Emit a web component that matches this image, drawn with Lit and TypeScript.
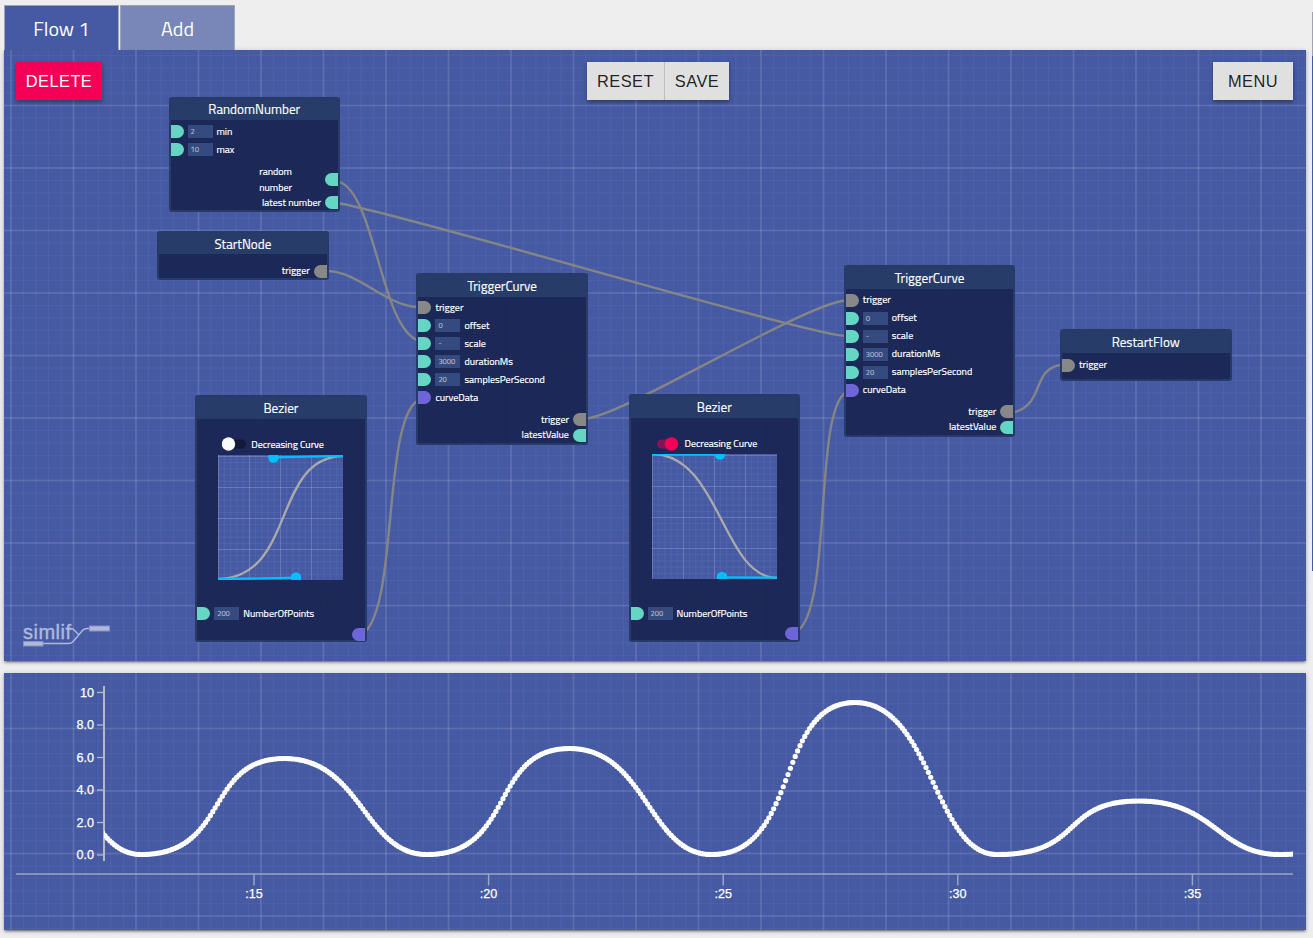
import { LitElement, html, svg, css } from "lit";
import { customElement } from "lit/decorators.js";

type Port = { y: number; label: string; kind: string; value?: string };
type FlowNode = {
  x: number; y: number; h: number; head: number; title: string;
  ins: Port[]; outs: Port[]; curve?: "up" | "down";
};

const curveIns = (values: string[]): Port[] => [
  { y: 34.5, label: "trigger", kind: "grey" },
  { y: 52.5, label: "offset", kind: "mint", value: values[0] },
  { y: 70.5, label: "scale", kind: "mint", value: values[1] },
  { y: 88.5, label: "durationMs", kind: "mint", value: values[2] },
  { y: 106.5, label: "samplesPerSecond", kind: "mint", value: values[3] },
  { y: 124.5, label: "curveData", kind: "violet" },
];
const curveOuts: Port[] = [
  { y: 146.5, label: "trigger", kind: "grey" },
  { y: 162, label: "latestValue", kind: "mint" },
];
const nodes: FlowNode[] = [
  { x: 168.5, y: 97, h: 114.5, head: 21, title: "RandomNumber",
    ins: [{ y: 34.5, label: "min", kind: "mint", value: "2" }, { y: 52.5, label: "max", kind: "mint", value: "10" }],
    outs: [{ y: 82.5, label: "random\nnumber", kind: "mint" }, { y: 105.5, label: "latest number", kind: "mint" }] },
  { x: 157.2, y: 231.4, h: 49, head: 21, title: "StartNode", ins: [], outs: [{ y: 39.7, label: "trigger", kind: "grey" }] },
  { x: 416.4, y: 273, h: 171.5, head: 22, title: "TriggerCurve", ins: curveIns(["0", "-", "3000", "20"]), outs: curveOuts },
  { x: 843.8, y: 265.4, h: 171.5, head: 22, title: "TriggerCurve", ins: curveIns(["0", "-", "3000", "20"]).map((p) => ({ ...p, y: p.y + 0.6 })), outs: curveOuts },
  { x: 1060, y: 329.4, h: 51.5, head: 22, title: "RestartFlow", ins: [{ y: 35.7, label: "trigger", kind: "grey" }], outs: [] },
  { x: 195.2, y: 394.6, h: 247.5, head: 22, title: "Bezier", curve: "up",
    ins: [{ y: 219, label: "NumberOfPoints", kind: "mint", value: "200" }], outs: [{ y: 239.5, label: "", kind: "violet" }] },
  { x: 628.5, y: 394, h: 248, head: 22, title: "Bezier", curve: "down",
    ins: [{ y: 219.6, label: "NumberOfPoints", kind: "mint", value: "200" }], outs: [{ y: 239.5, label: "", kind: "violet" }] },
];

@customElement("flow-node")
class FlowNodeElement extends LitElement {
  static properties = { node: { attribute: false } };
  declare node: FlowNode;
  static styles = css`
    :host { position: absolute; width: 171.5px; box-sizing: border-box; font-family: "Titillium Web", Roboto, sans-serif; color: #fff; }
    .box { position: relative; height: 100%; box-sizing: border-box; background: rgba(26, 37, 82, 0.94); border: 2px solid rgba(37, 57, 102, 0.96); border-radius: 3px; background-clip: padding-box; }
    .title { box-sizing: border-box; background: #283c69; font-size: 13.2px; text-align: center; line-height: 22px; -webkit-text-stroke: 0.15px #fff; }
    .title.tight { line-height: 20.5px; }
    .port { position: absolute; display: flex; align-items: center; height: 16px; font-size: 10px; line-height: 16px; white-space: pre; transform: translateY(-50%); }
    .label { margin-left: 4px; }
    .text { -webkit-text-stroke: 0.2px #fff; }
    .in { left: 0; }
    .out { right: 0; }
    .pin { width: 13px; height: 13px; flex: none; }
    .in .pin { border-radius: 0 6.5px 6.5px 0; }
    .out .pin { border-radius: 6.5px 0 0 6.5px; margin-left: 4px; }
    .two .pin { margin-left: 33px; }
    .mint { background: #65d6c3; }
    .grey { background: #888; }
    .violet { background: #6e65d8; }
    .value { width: 25px; height: 12.5px; line-height: 13px; box-sizing: border-box; padding-left: 3px; margin-left: 4px; background: #354b7f; color: #b3b8c9; font-size: 7.5px; -webkit-text-stroke: 0.15px #b3b8c9; }
    .switch { position: absolute; left: 24.5px; top: 39.5px; display: flex; align-items: center; height: 16px; font-size: 10px; }
    .switch svg { width: 26px; height: 16px; margin-right: 3.5px; }
    .plot { position: absolute; left: 21px; top: 58px; width: 125px; height: 125px; }
  `;
  render() {
    const n = this.node;
    const up = n.curve === "up";
    const lines = Array.from({ length: 20 }, (_, i) => 1.5 + i * 6.2);
    return html`<div class="box">
      <div class="title ${n.y < 200 ? "tight" : ""}" style="height:${n.head}px">${n.title}</div>
      ${n.ins.map((p) => html`<div class="port in" style="top:${p.y - 2}px"><i class="pin ${p.kind}"></i>${p.value ? html`<span class="value">${p.value}</span>` : ""}<span class="label text">${p.label}</span></div>`)}
      ${n.outs.map((p) => html`<div class="port out ${p.label.includes("\n") ? "two" : ""}" style="top:${p.y - 2}px"><span class="text">${p.label}</span><i class="pin ${p.kind}"></i></div>`)}
      ${n.curve ? html`
        <div class="switch">
          <svg viewBox="0 0 26 16">
            <rect x=${up ? 5 : 2} y="3.5" width="19" height="9" rx="4.5" fill=${up ? "#131a37" : "#851255"} />
            <circle cx=${up ? 6.5 : 16.5} cy="8" r="6.7" fill=${up ? "#fafafa" : "#f50057"} />
          </svg><span class="text">Decreasing Curve</span>
        </div>
        <svg class="plot" viewBox="0 0 125 125">
          <rect width="125" height="125" fill="#465aa4" />
          ${lines.map((v, i) => svg`<path d="M0 ${v}H125M${v - 1} 0V125" stroke="#fff" stroke-opacity=${i % 5 ? 0.06 : 0.18} />`)}
          ${up
            ? svg`<path d="M0 124C78 123 54 2 125 1" fill="none" stroke="#aaa" stroke-width="2.3" />
                <path d="M0 124.2L78 122.7M55 2.4L125 .9" stroke="#00bfff" stroke-width="2.2" />
                <circle cx="78" cy="122.5" r="5.3" fill="#00bfff" /><circle cx="55.5" cy="2.5" r="5.3" fill="#00bfff" />`
            : svg`<path d="M0 0C68 0 70 123 125 124" fill="none" stroke="#aaa" stroke-width="2.3" />
                <path d="M0 .5H68M70 123.3L125 123.7" stroke="#00bfff" stroke-width="2.2" />
                <circle cx="68" cy=".5" r="5.3" fill="#00bfff" /><circle cx="70" cy="123" r="5.3" fill="#00bfff" />`}
        </svg>` : ""}
    </div>`;
  }
}

const links = [
  "M340 182C375 196 381 325 417 340",
  "M340 203.500C400 213 790 330 845 336",
  "M329 271C360 273 385 305 417 307",
  "M587 418.500C630 412 800 306 845 300.500",
  "M366 631C397 598 384 424 417 401",
  "M800 629C831 596 815 415 845 393",
  "M1015 412C1044 404 1032 370 1060 365",
];

// Each key is [x, y] where the series turns; eased segments join them.
const keys = [
  [-3, 716], [141, 854.5], [284.5, 758.5], [427, 854.5], [569.5, 748.5],
  [711.5, 854.5], [855, 702.5], [997, 854.5], [1139, 801], [1280, 854.5], [1422, 790],
];
const bez = (a: number, b: number, c: number, d: number, t: number) =>
  a * (1 - t) ** 3 + 3 * b * t * (1 - t) ** 2 + 3 * c * t * t * (1 - t) + d * t ** 3;
const samples: { x: number; y: number }[] = [];
for (let k = 0; k < keys.length - 1; k++) {
  const [x0, y0] = keys[k];
  const [x1, y1] = keys[k + 1];
  const rising = y1 < y0;
  const a = rising ? 0.62 : 0.54;
  const b = rising ? 0.44 : 0.56;
  for (let i = 0; i < 60; i++) {
    const target = i / 60;
    let lo = 0, hi = 1;
    for (let s = 0; s < 24; s++) {
      const mid = (lo + hi) / 2;
      if (bez(0, a, b, 1, mid) < target) lo = mid; else hi = mid;
    }
    samples.push({ x: x0 + (x1 - x0) * target, y: y0 + (y1 - y0) * bez(0, 0, 1, 1, lo) });
  }
}

@customElement("app-root")
class AppRoot extends LitElement {
  static styles = css`
    :host { display: block; position: relative; box-sizing: border-box; width: 1313px; height: 938px; padding: 5px 7px 8px 4px; overflow: hidden; background: #eee; font-family: "Titillium Web", Roboto, sans-serif; }
    .tabs { display: flex; gap: 1px; height: 45px; }
    .tab { box-sizing: border-box; width: 115px; border: 1px solid #9fa3b2; border-bottom: 0; background: #7986b8; color: #fff; font-size: 20px; line-height: 46px; text-align: center; }
    .tab.on { background: #465aa4; }
    .panel { position: relative; overflow: hidden; background-color: #465aa4;
      background-image:
        linear-gradient(rgba(255,255,255,.09) 2px, transparent 2px),
        linear-gradient(90deg, rgba(255,255,255,.09) 2px, transparent 2px),
        linear-gradient(rgba(255,255,255,.04) 1px, transparent 1px),
        linear-gradient(90deg, rgba(255,255,255,.04) 1px, transparent 1px);
      background-size: 62.5px 62.5px, 62.5px 62.5px, 12.5px 12.5px, 12.5px 12.5px;
      background-position: 6px 54.5px, 6px 54.5px, 6.5px 55px, 6.5px 55px; }
    .shadow { box-shadow: 0 1px 5px rgba(0,0,0,.22), 0 2px 2px rgba(0,0,0,.2), 0 3px 1px -2px rgba(0,0,0,.2); }
    .flow { height: 611px; }
    .chart { height: 257px; }
    .shadow.chart { margin-top: 12px; }
    .layer { display: block; width: 1302px; height: 100%; }
    .bar { position: absolute; z-index: 2; top: 12px; left: 12px; right: 13px; display: flex; justify-content: space-between; }
    .btn { height: 38px; box-sizing: border-box; border: 0; padding: 0; background: #e0e0e0; color: rgba(0,0,0,.87); font: 16.4px/38px "Liberation Sans", sans-serif; letter-spacing: .45px; text-align: center; box-shadow: 0 2px 4px rgba(0,0,0,.38); }
    .delete { width: 86px; background: #f50057; color: #fff; }
    .menu { width: 80px; }
    .group { display: flex; margin-left: 1px; box-shadow: 0 2px 4px rgba(0,0,0,.38); }
    .group .btn { box-shadow: none; }
    .group .reset { width: 78px; border-right: 1px solid #bcbcbc; }
    .group .save { width: 64px; }
    .next { position: absolute; left: 1312px; top: 12px; width: 8px; height: 559px; background: linear-gradient(#9fa3b2 44px, #465aa4 44px); }
    .axis { font: 12.6px "Liberation Sans", sans-serif; fill: #fff; stroke: #fff; stroke-width: .25px; }
    .logo { font: 20px "Liberation Sans", sans-serif; fill: #b0b8dc; stroke: #b0b8dc; stroke-width: .4px; }
  `;
  render() {
    return html`
      <div class="tabs"><div class="tab on">Flow 1</div><div class="tab">Add</div></div>
      <div class="shadow"><div class="panel flow">
        <svg class="layer" viewBox="4 50 1302 611">
          ${links.map((d) => svg`<path d=${d} fill="none" stroke="#858585" stroke-width="2.4" />`)}
          <text class="logo" x="23" y="639" textLength="48">simlif</text>
          <path d="M70 629H73L79 635M43 643.500H69C72 643.500 72 643 74 640.500L82 631C84 629 84 628.500 87 628.500H90" fill="none" stroke="#b0b8dc" stroke-width="1.4" />
          <rect x="23.500" y="641.500" width="19.500" height="4.500" fill="#b0b8dc" stroke="#8791c0" />
          <rect x="89.500" y="626" width="20" height="5" fill="#b0b8dc" stroke="#8791c0" />
        </svg>
        <div class="bar">
          <button class="btn delete">DELETE</button>
          <div class="group"><button class="btn reset">RESET</button><button class="btn save">SAVE</button></div>
          <button class="btn menu">MENU</button>
        </div>
        ${nodes.map((n) => html`<flow-node .node=${n} style="left:${n.x - 4}px;top:${n.y - 50}px;height:${n.h}px"></flow-node>`)}
      </div></div>
      <div class="shadow chart"><div class="panel chart">
        <svg class="layer" viewBox="4 673 1302 257">
          <clipPath id="plot"><rect x="104" y="680" width="1189" height="200" /></clipPath>
          <path d="M104 686V861" stroke="#b5b8c6" stroke-width="2" />
          <path d="M16 874H1293" stroke="#9ca5c5" stroke-width="1.600" />
          ${["10", "8.0", "6.0", "4.0", "2.0", "0.0"].map((t, i) => svg`
            <path d="M97 ${692.5 + i * 32.5}H104" stroke="#b5b8c6" stroke-width="1.300" />
            <text class="axis" x="94" y=${697 + i * 32.4} text-anchor="end">${t}</text>`)}
          ${[15, 20, 25, 30, 35].map((t, i) => svg`
            <path d="M${254 + i * 234.6} 874V885.500" stroke="#9ca5c5" stroke-width="1.500" />
            <text class="axis" x=${254 + i * 234.6} y="898" text-anchor="middle">:${t}</text>`)}
          <g clip-path="url(#plot)" fill="#fff">${samples.map((s) => svg`<circle cx=${s.x} cy=${s.y} r="2.6" />`)}</g>
        </svg>
      </div></div>
      <div class="next"></div>`;
  }
}
